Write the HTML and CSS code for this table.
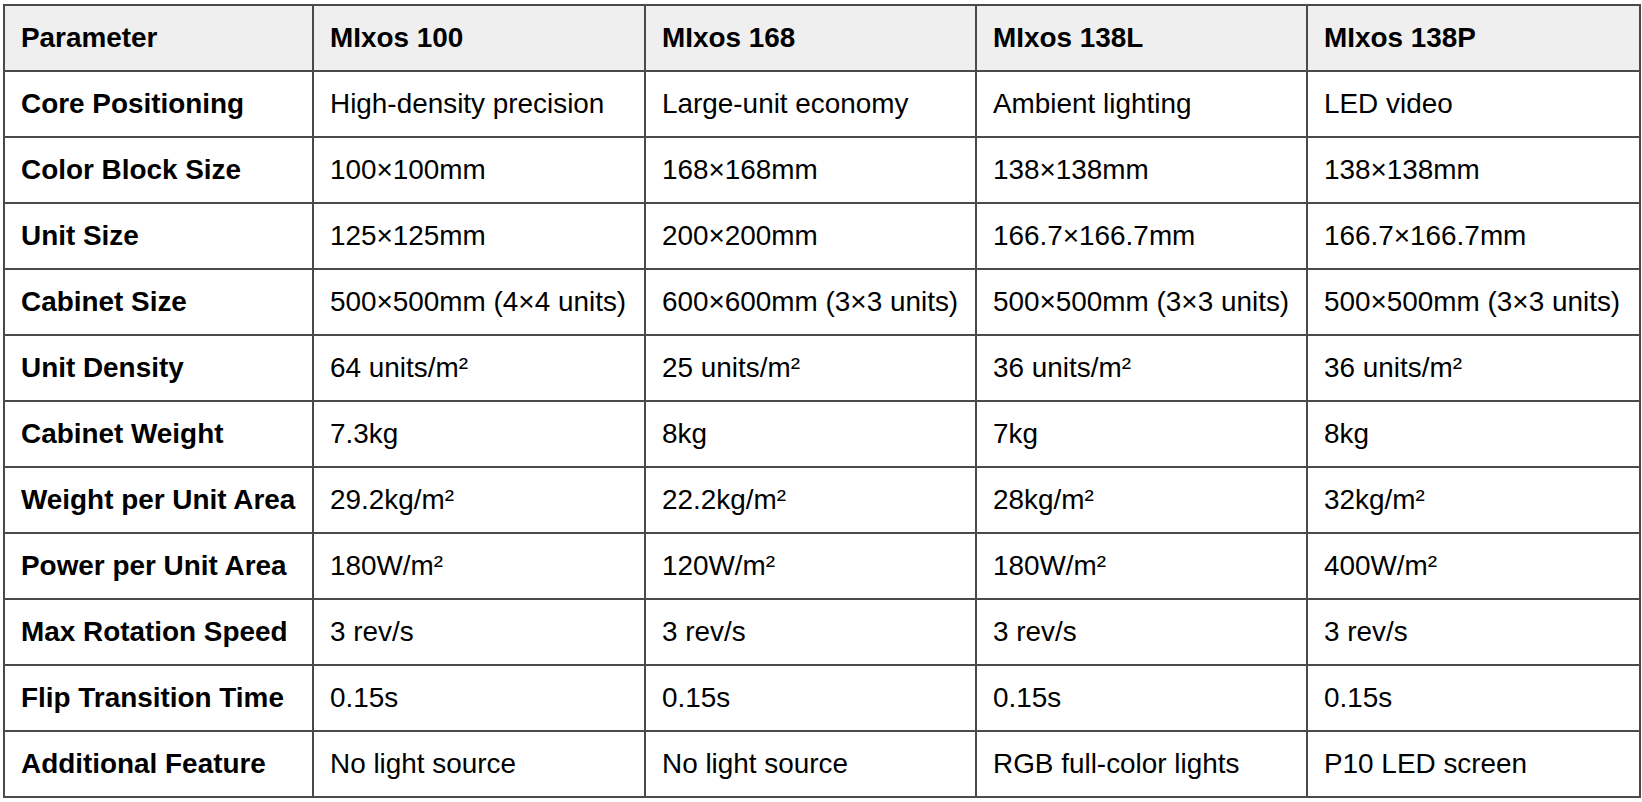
FILE: index.html
```html
<!DOCTYPE html>
<html lang="en">
<head>
<meta charset="utf-8">
<title>Mlxos comparison</title>
<link rel="stylesheet" href="styles.css">
</head>
<body>
<table class="spec">
  <colgroup>
    <col class="c-param">
    <col class="c-a">
    <col class="c-b">
    <col class="c-c">
    <col class="c-d">
  </colgroup>
  <thead>
    <tr><th>Parameter</th><th>MIxos 100</th><th>MIxos 168</th><th>MIxos 138L</th><th>MIxos 138P</th></tr>
  </thead>
  <tbody>
    <tr><th>Core Positioning</th><td>High-density precision</td><td>Large-unit economy</td><td>Ambient lighting</td><td>LED video</td></tr>
    <tr><th>Color Block Size</th><td>100×100mm</td><td>168×168mm</td><td>138×138mm</td><td>138×138mm</td></tr>
    <tr><th>Unit Size</th><td>125×125mm</td><td>200×200mm</td><td>166.7×166.7mm</td><td>166.7×166.7mm</td></tr>
    <tr><th>Cabinet Size</th><td>500×500mm (4×4 units)</td><td>600×600mm (3×3 units)</td><td>500×500mm (3×3 units)</td><td>500×500mm (3×3 units)</td></tr>
    <tr><th>Unit Density</th><td>64 units/m²</td><td>25 units/m²</td><td>36 units/m²</td><td>36 units/m²</td></tr>
    <tr><th>Cabinet Weight</th><td>7.3kg</td><td>8kg</td><td>7kg</td><td>8kg</td></tr>
    <tr><th>Weight per Unit Area</th><td>29.2kg/m²</td><td>22.2kg/m²</td><td>28kg/m²</td><td>32kg/m²</td></tr>
    <tr><th>Power per Unit Area</th><td>180W/m²</td><td>120W/m²</td><td>180W/m²</td><td>400W/m²</td></tr>
    <tr><th>Max Rotation Speed</th><td>3 rev/s</td><td>3 rev/s</td><td>3 rev/s</td><td>3 rev/s</td></tr>
    <tr><th>Flip Transition Time</th><td>0.15s</td><td>0.15s</td><td>0.15s</td><td>0.15s</td></tr>
    <tr><th>Additional Feature</th><td>No light source</td><td>No light source</td><td>RGB full-color lights</td><td>P10 LED screen</td></tr>
  </tbody>
</table>
</body>
</html>
```

FILE: styles.css
```css
html, body {
  margin: 0;
  padding: 0;
  background: #ffffff;
}

body {
  padding: 4px 0 0 3px;
  font-family: "Liberation Sans", Arial, sans-serif;
  color: #000000;
}

.spec {
  border-collapse: collapse;
  width: 1636px;
  table-layout: fixed;
  font-size: 27.9px;
  line-height: 32px;
}

.c-param { width: 309px; }
.c-a { width: 332px; }
.c-b { width: 331px; }
.c-c { width: 331px; }
.c-d { width: 333px; }

.spec th,
.spec td {
  border: 2px solid #4a4a4a;
  padding: 16px 16px;
  text-align: left;
  vertical-align: middle;
  white-space: nowrap;
}

.spec th {
  font-weight: bold;
}

.spec td {
  font-weight: normal;
}

.spec thead th {
  background: #efefef;
}
```
